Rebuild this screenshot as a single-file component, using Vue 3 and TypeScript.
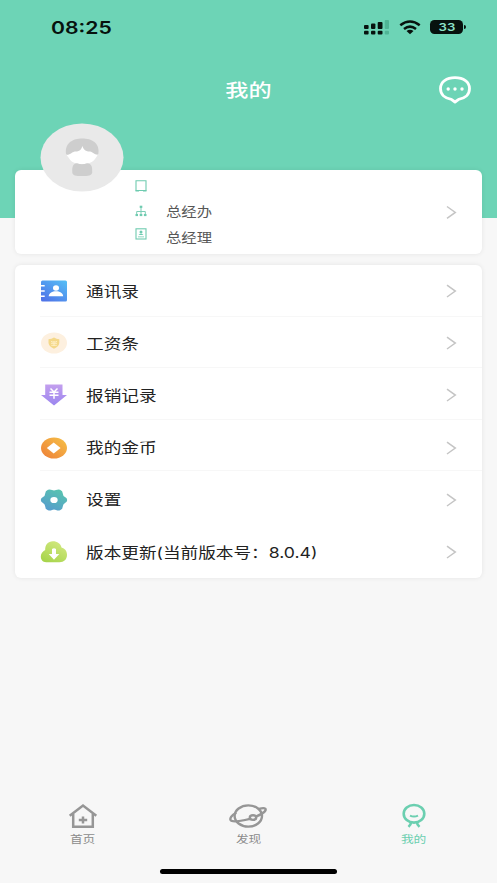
<script setup lang="ts">
interface MenuItem {
  icon: string
  label: string
}

const menu: MenuItem[] = [
  { icon: 'contacts', label: '通讯录' },
  { icon: 'salary', label: '工资条' },
  { icon: 'expense', label: '报销记录' },
  { icon: 'coin', label: '我的金币' },
  { icon: 'settings', label: '设置' },
  { icon: 'update', label: '版本更新(当前版本号：8.0.4)' },
]
</script>

<template>
  <main class="screen">
    <header class="hero">
      <div class="status">
        <span class="time"><span class="wide">08:25</span></span>
        <div class="indicators">
          <svg class="signal" width="26" height="16" viewBox="0 0 26 16">
            <g fill="#07120e">
              <rect x="0" y="6" width="4.6" height="4" rx="1" /><rect x="7" y="4.6" width="4.4" height="5.4" rx="1" /><rect x="13.7" y="3" width="4.8" height="7" rx="1" />
              <rect x="0" y="11.8" width="4.6" height="3.6" rx="1" /><rect x="7" y="11.8" width="4.4" height="3.6" rx="1" /><rect x="13.7" y="11.8" width="4.8" height="3.6" rx="1" />
            </g>
            <g fill="#4fb596"><rect x="20.7" y="1" width="4.3" height="9" rx="1" /><rect x="20.7" y="11.8" width="4.3" height="3.6" rx="1" /></g>
          </svg>
          <svg class="wifi" width="22" height="15" viewBox="0 0 22 15">
            <g fill="none" stroke="#07120e" stroke-width="2.5">
              <path d="M1.3 5.3Q11-2.3 20.7 5.3" /><path d="M5 9Q11 4.3 17 9" />
            </g>
            <path d="M7.5 11Q11 8.3 14.5 11L11 14.3Z" fill="#07120e" />
          </svg>
          <div class="battery"><span>33</span></div>
        </div>
      </div>
      <div class="titlebar">
        <h1><span>我的</span></h1>
        <svg class="chat" width="34" height="28" viewBox="0 0 34 28">
          <path d="M17 1.7C25.5 1.7 31.5 5.8 31.5 12.5C31.5 18.5 27.3 22.4 20.7 23.3L17 26L13.3 23.3C6.7 22.4 2.5 18.5 2.5 12.5C2.5 5.8 8.5 1.7 17 1.7Z" fill="none" stroke="#fff" stroke-width="2.8" stroke-linejoin="round" />
          <g fill="#fff"><circle cx="10.2" cy="13" r="1.7" /><circle cx="17" cy="13" r="1.7" /><circle cx="24" cy="13" r="1.7" /></g>
        </svg>
      </div>
    </header>

    <section class="card profile">
      <svg class="avatar" width="84" height="69" viewBox="0 0 84 69">
        <ellipse cx="42" cy="34.5" rx="41.5" ry="34" fill="#e9e9e9" />
        <path d="M26 31C24.5 20 33 15.6 42.3 15.6C51.5 15.6 60 20 58.3 31L54 34H31Z" fill="#cecece" />
        <path d="M26.7 32C31 31.5 32 29 35 28.6C40 28.8 42 25.5 42.3 22.7C43 25.5 45 28.7 50 28.6C53 29 54 31.6 57.7 31.8C57 33.5 56.2 34 55.5 35.3C53 39.5 48 41 42.3 41C36 41 31.5 39.5 29 35.3C28.5 34 27.5 33.5 26.7 32Z" fill="#fff" />
        <path d="M37 40.3Q42 42.4 47 40.3C51.5 40.8 52.5 43.3 52.2 49.5C52 52.5 48 53 42 53C36 53 32.5 52.5 32.3 49.5C32 43.3 33 40.8 37 40.3Z" fill="#cecece" />
      </svg>
      <div class="facts">
        <div class="fact">
          <svg width="12" height="12" viewBox="0 0 12 12"><path d="M1 .8H11V10.5H1Z" fill="none" stroke="#6fcbb0" stroke-width="1.1" /><path d="M.5 10.8H4M8 10.8H11.5" stroke="#6fcbb0" stroke-width="1.2" /></svg>
        </div>
        <div class="fact">
          <svg width="12" height="12" viewBox="0 0 12 12"><path d="M6 2V9.5M1.7 9.5V6.5H10.3V9.5" fill="none" stroke="#7dceb6" /><g fill="#6fcbb0"><rect x="4.7" y=".7" width="2.6" height="2.2" /><rect x=".5" y="9" width="2.5" height="2.1" /><rect x="4.7" y="9" width="2.6" height="2.1" /><rect x="8.9" y="9" width="2.6" height="2.1" /></g></svg>
          <span class="wide">总经办</span>
        </div>
        <div class="fact">
          <svg width="12" height="12" viewBox="0 0 12 12"><rect x="1" y=".8" width="10" height="10.2" fill="none" stroke="#6fcbb0" stroke-width="1.1" /><circle cx="6" cy="4" r="1.5" fill="#6fcbb0" /><path d="M3.5 7Q6 4.3 8.5 7ZM3 8.6H9V9.2H3Z" fill="#6fcbb0" /></svg>
          <span class="wide">总经理</span>
        </div>
      </div>
      <svg class="chevron" width="12" height="14" viewBox="0 0 12 14"><path d="M2 1.5L10.3 7.4L2 13.3" /></svg>
    </section>

    <nav class="card menu">
      <div v-for="item in menu" :key="item.icon" class="row" :class="item.icon">
        <svg class="icon" width="28" height="24" viewBox="0 0 28 24">
          <defs>
            <linearGradient id="blue" x1="1" y1="0" x2=".2" y2="1"><stop stop-color="#55c0f6" /><stop offset="1" stop-color="#4f74e8" /></linearGradient>
            <linearGradient id="purple" x2="0" y2="1"><stop stop-color="#c39fee" /><stop offset="1" stop-color="#9b86ef" /></linearGradient>
            <linearGradient id="orange" x1="1" x2="0" y2="1"><stop stop-color="#f6c247" /><stop offset="1" stop-color="#ed7e38" /></linearGradient>
            <linearGradient id="teal" x1=".8" x2=".2" y2="1"><stop stop-color="#59c5ae" /><stop offset="1" stop-color="#569bce" /></linearGradient>
            <linearGradient id="lime" x1=".8" x2=".2" y2="1"><stop stop-color="#d4e982" /><stop offset="1" stop-color="#a6d44b" /></linearGradient>
          </defs>
          <template v-if="item.icon === 'contacts'">
            <rect x="1" y="1.5" width="26" height="21" rx="1.5" fill="url(#blue)" />
            <path d="M0 6.7H4.7M0 12H4.7M0 17.3H4.7" stroke="#fff" stroke-width="1.6" />
            <ellipse cx="16" cy="9" rx="3" ry="2.8" fill="#fff" /><path d="M8.7 17.3C9 13.7 12.2 12.2 16 12.2S22.8 13.7 23.2 17.3Z" fill="#fff" />
          </template>
          <template v-else-if="item.icon === 'salary'">
            <ellipse cx="14" cy="12" rx="13" ry="10.5" fill="#fdf0df" />
            <path d="M8.5 8.2Q11.5 8.2 14 6.6Q16.5 8.2 19.3 8.2V12Q19 15.6 14 17.7Q9 15.6 8.5 12Z" fill="#f4d889" />
            <path d="M11 10.4L13 11.2L14 10.4L15 11.2L17 10.4M11 12.3H17M11.3 14.3H16.8M14 11V15" fill="none" stroke="#fff0c9" stroke-width=".9" />
          </template>
          <template v-else-if="item.icon === 'expense'">
            <path d="M5.2 1.5H22.5V12H27L14 22.5L1 12H5.2Z" fill="url(#purple)" />
            <path d="M10.5 5.5L14 9L17.5 5.5M9.5 9.3H18.5M9.5 12.2H18.5M14 9V15.8" fill="none" stroke="#fff" stroke-width="1.5" />
          </template>
          <template v-else-if="item.icon === 'coin'">
            <ellipse cx="14" cy="12" rx="13" ry="10.6" fill="url(#orange)" /><path d="M13.7 6.5L20.6 12L13.7 17.5L6.8 12Z" fill="#fff" />
          </template>
          <template v-else-if="item.icon === 'settings'">
            <path d="M8 1.7Q10.5 1.2 12 2.1Q14 3 16 2.1Q18 1.2 20 1.7Q22.8 2.8 22.8 5.5Q22.9 8 25 9Q27.2 10 27.2 12T25 15Q22.9 16 22.8 18.5Q22.6 21.3 20 22.3Q18 22.8 16 21.9Q14 21 12 21.9Q10.5 22.8 8 22.3Q5.2 21.3 5.2 18.5Q5.1 16 3 15Q.8 14 .8 12T3 9Q5.1 8 5.2 5.5Q5.2 2.8 8 1.7Z" fill="url(#teal)" /><ellipse cx="14" cy="12" rx="3.7" ry="3.1" fill="#fff" />
          </template>
          <template v-else>
            <path d="M6.2 22.2C2.5 22.2.8 19.5.8 16.5C.8 13.5 2.6 11.7 5.2 10C5 5 7.8 1.2 13 1.2C17.3 1.2 20.5 3.5 21.5 7.4C24.8 8.4 27 10.9 27 14.7C27 19.3 24 22.2 19.5 22.2Z" fill="url(#lime)" />
            <path d="M12 9Q14 7.5 16 9V14H19.3L14 19.7L8.7 14H12Z" fill="#fff" />
          </template>
        </svg>
        <span class="label wide">{{ item.label }}</span>
        <svg class="chevron" width="12" height="14" viewBox="0 0 12 14"><path d="M2 1.2L10.3 7.1L2 13" /></svg>
      </div>
    </nav>

    <footer class="tabs">
      <div class="tab">
        <svg width="30" height="26" viewBox="0 0 30 26"><g fill="none" stroke="#969696" stroke-width="2.5"><path d="M1.7 12.8L15 2.5L28.3 12.8" /><path d="M5.2 11V23.7H24.8V11M10.8 17H19.2M15 13.5V20.5" /></g></svg>
        <span><span>首页</span></span>
      </div>
      <div class="tab">
        <svg width="38" height="26" viewBox="0 0 38 26"><g fill="none" stroke="#969696" stroke-width="2.4"><ellipse cx="19.3" cy="13" rx="13.7" ry="10.6" /><path d="M7.3 9.7C2 12.5.7 15.5 1.7 17.2C3 19.3 11 18.2 21 15.8M26.8 13.6C34 10.8 38 7.5 36.2 5.7C35.5 4.8 33 5 30 5.8" /><ellipse cx="24" cy="14.6" rx="3.2" ry="2.3" /></g></svg>
        <span><span>发现</span></span>
      </div>
      <div class="tab active">
        <svg width="30" height="26" viewBox="0 0 30 26"><g fill="none" stroke="#6bcfb0" stroke-width="2.6"><ellipse cx="15" cy="10.8" rx="10.3" ry="8.8" /><path d="M12.3 18.7C12 21.5 11 22.5 9.5 23.9M17.7 18.7C18 21.5 19 22.5 20.5 23.9" /><path d="M11 12.6Q15 14.6 19 12.6" stroke-width="2" /></g></svg>
        <span><span>我的</span></span>
      </div>
    </footer>
    <div class="home-indicator"></div>
  </main>
</template>

<style>
body { margin: 0; }
</style>

<style scoped>
.screen {
  display: flex;
  flex-direction: column;
  width: 497px;
  height: 883px;
  overflow: hidden;
  background: #f7f7f7;
  font-family: Inter, "Noto Sans CJK SC", sans-serif;
}
svg { display: block; flex: none; }
.wide { display: inline-block; transform: scaleX(1.2); transform-origin: left center; white-space: nowrap; }
.hero { flex: none; height: 218px; background: #6dd4b6; }
.status { display: flex; align-items: center; justify-content: space-between; height: 54px; padding: 0 34px 0 51px; box-sizing: border-box; }
.time { font-size: 17.5px; font-weight: 600; color: #07120e; }
.time .wide { transform: scaleX(1.21); }
.indicators { display: flex; align-items: center; }
.signal { margin-right: 9px; }
.wifi { margin-right: 9px; }
.battery { position: relative; width: 33px; height: 14px; border-radius: 4.5px; background: #07120e; color: #8be1c8; font-size: 11px; font-weight: 600; line-height: 14px; text-align: center; }
.battery span { display: inline-block; transform: scaleX(1.2); }
.battery::after { content: ""; position: absolute; left: 34px; top: 5px; width: 2px; height: 4px; border-radius: 0 2px 2px 0; background: #07120e; }
.titlebar { display: grid; grid-template-columns: 1fr auto 1fr; align-items: center; height: 72px; padding: 0 25px; }
h1 { grid-column: 2; margin: 0 0 3px; font-size: 18.5px; font-weight: 500; color: #fff; }
h1 span { display: inline-block; transform: scaleX(1.25); }
.chat { justify-self: end; }
.card { margin: 0 15px; border-radius: 6px; background: #fff; box-shadow: 0 0 5px rgba(0, 0, 0, .08); }
.profile { display: flex; flex: none; position: relative; height: 84px; margin-top: -48px; padding: 0 25px 0 120px; box-sizing: border-box; align-items: center; }
.avatar { position: absolute; left: 25px; top: -47px; }
.facts { display: flex; flex: 1; flex-direction: column; height: 78px; }
.fact { display: flex; height: 26px; align-items: center; color: #575757; font-size: 12.8px; }
.fact .wide { padding-bottom: 3px; }
.fact svg { margin-right: 19px; }
.fact:nth-child(2) svg { margin-top: -3px; }
.fact:nth-child(3) svg { margin-top: -8px; }
.chevron path { fill: none; stroke: #c5c5c5; stroke-width: 1.5; }
.menu { display: flex; flex: none; flex-direction: column; height: 313px; margin-top: 11px; }
.row { position: relative; display: flex; flex: 1; align-items: center; padding: 0 25px; color: #222; font-size: 14.7px; }
.row .label { margin-left: 17.5px; padding-bottom: 2px; }
.row.update .label { padding-bottom: 0; }
.row .chevron { margin-left: auto; }
.row::after { content: ""; position: absolute; left: 25px; right: 0; bottom: 0; height: 1px; background: #f7f7f7; }
.row.salary::after { bottom: 1px; }
.row.expense::after { bottom: 2px; }
.row.coin::after { bottom: 3px; }
.row.settings::after, .row.update::after { display: none; }
.tabs { display: grid; grid-template-columns: repeat(3, 165.6px); flex: none; height: 66px; margin-top: 225px; }
.tab { display: flex; flex-direction: column; align-items: center; color: #8c8c8c; font-size: 10.6px; line-height: 16px; }
.tab > span { margin-top: 3px; }
.tab > span > span { display: inline-block; transform: scaleX(1.2); }
.tab.active { color: #6bcfb0; }
.home-indicator { flex: none; width: 177px; height: 5px; margin-left: 160px; border-radius: 3px; background: #000; }
</style>
